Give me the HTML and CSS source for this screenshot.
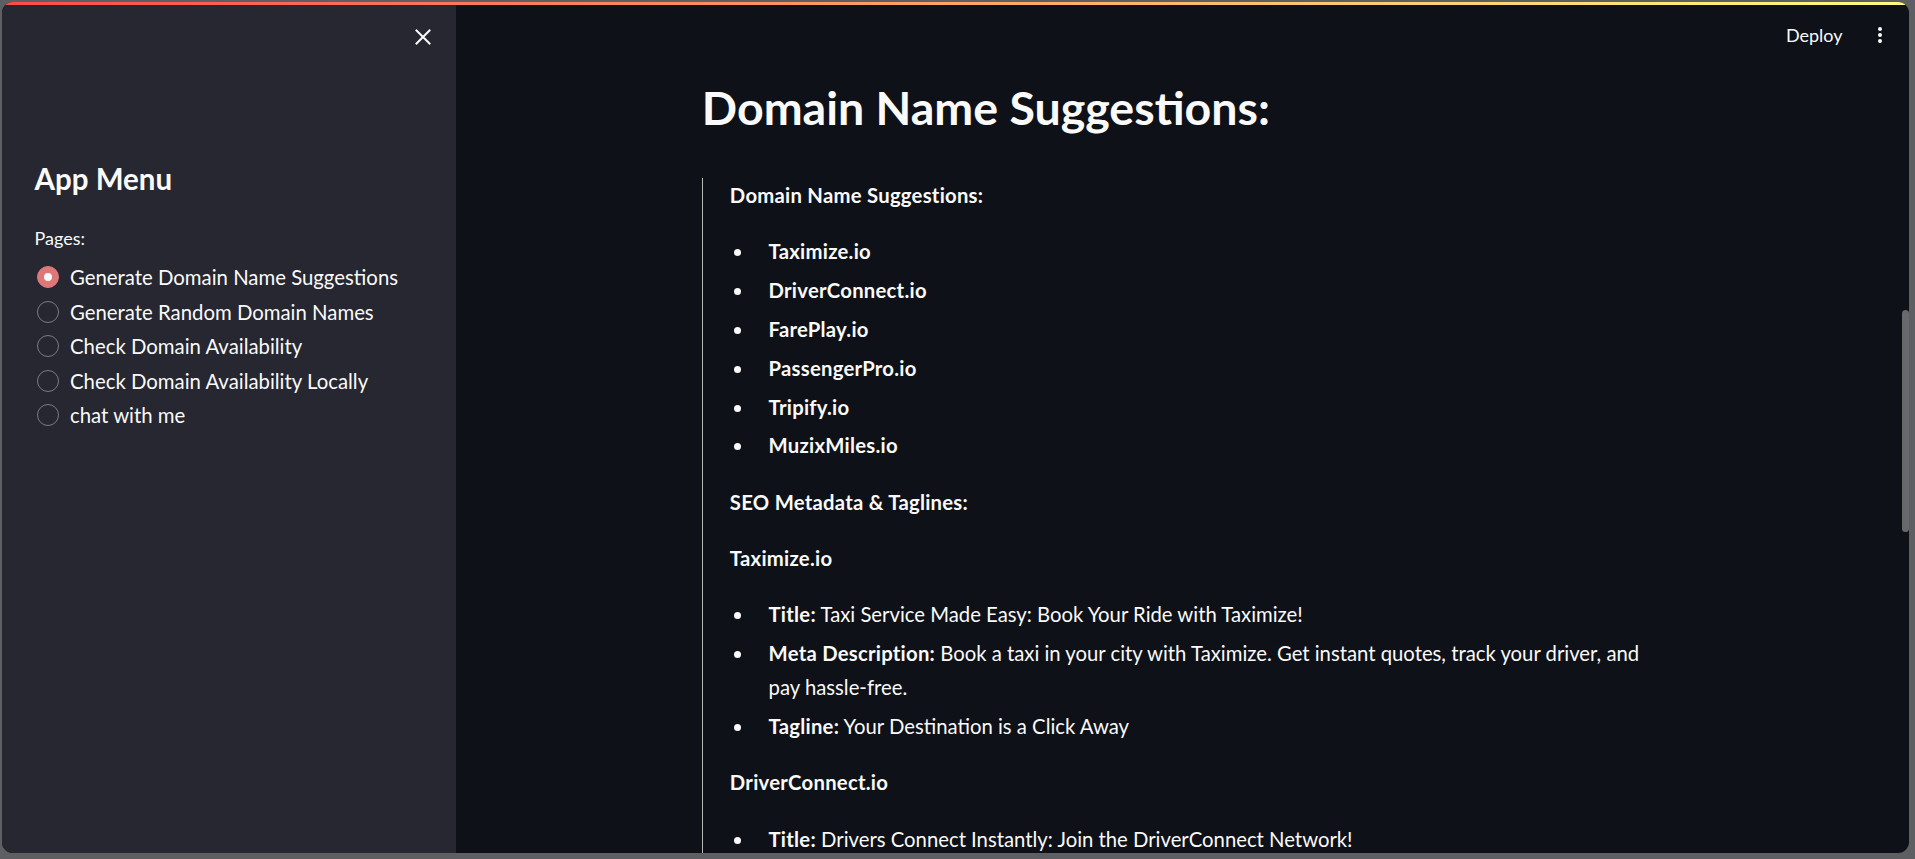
FILE: index.html
```html
<!DOCTYPE html>
<html lang="en">
<head>
<meta charset="utf-8">
<title>Domain Name Suggestions</title>
<link rel="stylesheet" href="styles.css">
</head>
<body>
<div class="window">
  <div class="decoration"></div>
  <div class="app">
    <aside class="sidebar">
      <div class="sidebar-top">
        <button class="close" aria-label="Close sidebar">
          <svg viewBox="0 0 16 16" width="16" height="16"><path d="M1.5 1.5 L14.5 14.5 M14.5 1.5 L1.5 14.5" stroke="#fafafa" stroke-width="2" fill="none" stroke-linecap="square"/></svg>
        </button>
      </div>
      <h2 class="menu-title">App Menu</h2>
      <div class="radio-label">Pages:</div>
      <div class="radio-group">
        <label class="radio checked"><span class="dot"></span><span class="radio-text">Generate Domain Name Suggestions</span></label>
        <label class="radio"><span class="dot"></span><span class="radio-text">Generate Random Domain Names</span></label>
        <label class="radio"><span class="dot"></span><span class="radio-text">Check Domain Availability</span></label>
        <label class="radio"><span class="dot"></span><span class="radio-text">Check Domain Availability Locally</span></label>
        <label class="radio"><span class="dot"></span><span class="radio-text">chat with me</span></label>
      </div>
    </aside>
    <main class="main">
      <div class="main-col">
        <header class="topbar">
          <span class="deploy">Deploy</span>
          <span class="kebab"><i></i><i></i><i></i></span>
        </header>
        <div class="block">
          <h2 class="page-title">Domain Name Suggestions:</h2>
          <blockquote class="result">
            <p><strong>Domain Name Suggestions:</strong></p>
            <ul>
              <li><span><strong>Taximize.io</strong></span></li>
              <li><span><strong>DriverConnect.io</strong></span></li>
              <li><span><strong>FarePlay.io</strong></span></li>
              <li><span><strong>PassengerPro.io</strong></span></li>
              <li><span><strong>Tripify.io</strong></span></li>
              <li><span><strong>MuzixMiles.io</strong></span></li>
            </ul>
            <p><strong>SEO Metadata &amp; Taglines:</strong></p>
            <p><strong>Taximize.io</strong></p>
            <ul>
              <li><span><strong>Title:</strong> Taxi Service Made Easy: Book Your Ride with Taximize!</span></li>
              <li><span><strong>Meta Description:</strong> Book a taxi in your city with Taximize. Get instant quotes, track your driver, and pay hassle-free.</span></li>
              <li><span><strong>Tagline:</strong> Your Destination is a Click Away</span></li>
            </ul>
            <p><strong>DriverConnect.io</strong></p>
            <ul>
              <li><span><strong>Title:</strong> Drivers Connect Instantly: Join the DriverConnect Network!</span></li>
              <li><span><strong>Meta Description:</strong> Connect with passengers in real time and grow your driving business.</span></li>
            </ul>
          </blockquote>
        </div>
      </div>
      <div class="scroll-track"><div class="scroll-thumb"></div></div>
    </main>
  </div>
</div>
</body>
</html>
```

FILE: styles.css
```css
html, body {
  margin: 0;
  padding: 0;
  height: 100%;
  overflow: hidden;
}
body {
  background: #5e5f63;
  font-family: "Lato", "Liberation Sans", sans-serif;
  color: #fafafa;
}
.window {
  margin: 2px 0 0 2px;
  width: 1907px;
  height: 851px;
  border-radius: 11px;
  overflow: hidden;
  display: flex;
  flex-direction: column;
  background: #0e1117;
}
.decoration {
  height: 3px;
  flex: none;
  background: linear-gradient(90deg, #ff4b4b, #fffd80);
}
.app {
  flex: 1;
  display: flex;
  min-height: 0;
}
.sidebar {
  width: 454px;
  flex: none;
  box-sizing: border-box;
  background: #262730;
  padding: 0 32px 0 32.5px;
}
.sidebar-top {
  display: flex;
  justify-content: flex-end;
  padding-top: 24px;
  margin-right: -7px;
}
.close {
  background: none;
  border: 0;
  padding: 0;
  width: 16px;
  height: 16px;
  display: block;
}
.close svg { display: block; }
.menu-title {
  margin: 114px 0 0 0;
  font-size: 29.5px;
  line-height: 40px;
  font-weight: 700;
}
.radio-label {
  margin-top: 27px;
  font-size: 18px;
  line-height: 24px;
}
.radio-group {
  margin-top: 10px;
  display: flex;
  flex-direction: column;
}
.radio {
  display: flex;
  align-items: center;
  height: 34.5px;
  padding-left: 2px;
  font-size: 20.35px;
}
.dot {
  width: 22px;
  height: 22px;
  box-sizing: border-box;
  border-radius: 50%;
  border: 1.5px solid #7a7b82;
  margin-right: 11.5px;
  flex: none;
  display: flex;
  align-items: center;
  justify-content: center;
}
.radio.checked .dot {
  background: #de7878;
  border-color: #de7878;
}
.radio.checked .dot::after {
  content: "";
  width: 8px;
  height: 8px;
  border-radius: 50%;
  background: #fafafa;
}
.main {
  flex: 1;
  display: flex;
  min-width: 0;
}
.main-col {
  flex: 1;
  min-width: 0;
}
.topbar {
  height: 60px;
  display: flex;
  align-items: center;
  justify-content: flex-end;
  gap: 35px;
  padding-right: 19px;
}
.deploy {
  font-size: 18px;
}
.kebab {
  display: flex;
  flex-direction: column;
  gap: 1.5px;
}
.kebab i {
  display: block;
  width: 4.5px;
  height: 4.5px;
  border-radius: 50%;
  background: #fafafa;
}
.block {
  max-width: 996.6px;
  width: 100%;
  box-sizing: border-box;
  padding: 0 21.66px;
  margin: 0 auto;
}
.page-title {
  margin: 11.5px 0 0 0;
  font-size: 46.5px;
  line-height: 60px;
  font-weight: 700;
}
.result {
  margin: 41.5px 0 0 0;
  border-left: 1px solid rgba(250, 250, 250, 0.72);
  padding-left: 27px;
  font-size: 20.3px;
  line-height: 34.56px;
}
.result p {
  margin: 0 0 21.6px 0;
}
.result strong {
  font-weight: 700;
  letter-spacing: 0.25px;
}
.result ul {
  list-style: none;
  margin: 0 0 21.6px 0;
  padding: 0;
}
.result li {
  display: flex;
  margin: 4.3px 0;
}
.result li::before {
  content: "";
  flex: none;
  width: 7px;
  height: 7px;
  border-radius: 50%;
  background: #fafafa;
  margin: 15px 27.5px 0 4.2px;
}
.scroll-track {
  width: 8px;
  flex: none;
}
.scroll-thumb {
  margin: 305px 0 0 1px;
  width: 7px;
  height: 222px;
  border-radius: 4px;
  background: #68696d;
}
```
